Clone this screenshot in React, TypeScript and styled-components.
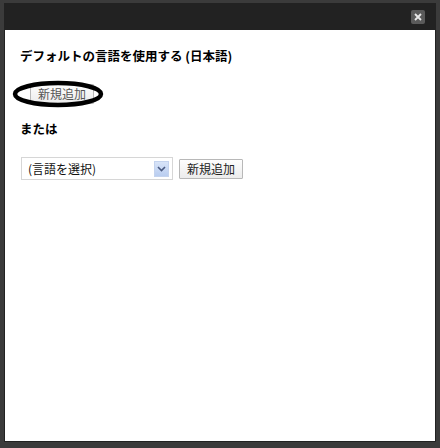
import React from "react";
import styled, { createGlobalStyle } from "styled-components";

const Global = createGlobalStyle`
  html, body { margin: 0; padding: 0; background: #3b3b3b; }
  body { font-family: "Noto Sans CJK JP", "Noto Sans", sans-serif; }
`;

const Page = styled.div`
  width: 440px;
  height: 448px;
  box-sizing: border-box;
  padding: 3px 4px 0 4px;
  background: #3b3b3b;
  overflow: hidden;
`;

const Dialog = styled.div`
  width: 432px;
  background: #222;
  padding: 0 1px 1px 1px;
  box-sizing: border-box;
`;

const Header = styled.div`
  height: 27px;
  display: flex;
  align-items: center;
  justify-content: flex-end;
  padding-right: 10px;
  padding-top: 1px;
  box-sizing: border-box;
`;

const Close = styled.div`
  width: 14px;
  height: 14px;
  background: #5a5a5a;
  border-radius: 2px;
  display: flex;
  align-items: center;
  justify-content: center;
`;

const Body = styled.div`
  position: relative;
  background: #fff;
  height: 411px;
  padding: 17px 15px 0 15px;
  box-sizing: border-box;
`;

const Heading = styled.div<{ $mb: number }>`
  font-size: 12.5px;
  font-weight: bold;
  color: #000;
  line-height: 18px;
  margin-bottom: ${(p) => p.$mb}px;
`;

const Btn = styled.button<{ $muted?: boolean }>`
  font-family: "Noto Sans CJK JP", "Noto Sans", sans-serif;
  font-size: 12px;
  color: ${(p) => (p.$muted ? "#555" : "#222")};
  height: 20px;
  padding: 0 7px;
  background: linear-gradient(#fdfdfd, #ececec);
  border: 1px solid #b8b8b8;
  border-radius: 1px;
  line-height: 18px;
  box-sizing: border-box;
  cursor: pointer;
`;

const FirstRow = styled.div`
  padding-left: 10px;
  margin-bottom: 15px;
  height: 22px;
  display: flex;
  align-items: center;
`;

const SelectRow = styled.div`
  display: flex;
  align-items: center;
  gap: 6px;
  padding-left: 1px;
`;

const SelectBox = styled.div`
  width: 152px;
  height: 23px;
  box-sizing: border-box;
  border: 1px solid #d6d6d6;
  display: flex;
  align-items: center;
  justify-content: space-between;
  padding: 0 3px 0 6px;
  font-size: 12px;
  color: #111;
`;

const Arrow = styled.div`
  width: 15px;
  height: 16px;
  background: linear-gradient(#d8e4f8, #b9cdf0);
  border: 1px solid #c4d3ee;
  box-sizing: border-box;
  display: flex;
  align-items: center;
  justify-content: center;
`;

const Ellipse = styled.svg`
  position: absolute;
  left: 7px;
  top: 50px;
`;

export default function App() {
  return (
    <>
      <Global />
      <Page>
        <Dialog>
          <Header>
            <Close>
              <svg width="10" height="10" viewBox="0 0 10 10">
                <path d="M2 2L8 8M8 2L2 8" stroke="#e8e8e8" strokeWidth="1.8" />
              </svg>
            </Close>
          </Header>
          <Body>
            <Heading $mb={18}>デフォルトの言語を使用する (日本語)</Heading>
            <FirstRow>
              <Btn $muted>新規追加</Btn>
            </FirstRow>
            <Heading $mb={19}>または</Heading>
            <SelectRow>
              <SelectBox>
                <span>(言語を選択)</span>
                <Arrow>
                  <svg width="9" height="6" viewBox="0 0 9 6">
                    <path d="M1 1L4.5 4.5L8 1" stroke="#4a5a80" strokeWidth="1.6" fill="none" />
                  </svg>
                </Arrow>
              </SelectBox>
              <Btn>新規追加</Btn>
            </SelectRow>
            <Ellipse width="92" height="28" viewBox="0 0 92 28">
              <ellipse cx="46" cy="14" rx="43" ry="11" fill="none" stroke="#000" strokeWidth="4.5" />
            </Ellipse>
          </Body>
        </Dialog>
      </Page>
    </>
  );
}
